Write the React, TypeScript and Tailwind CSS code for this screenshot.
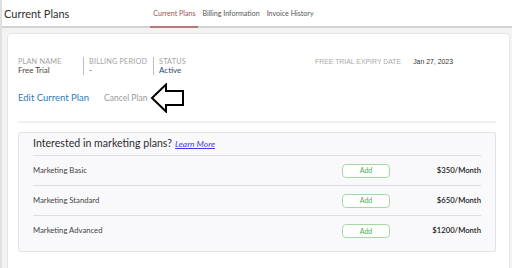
import React from "react";

const plans = [
    { name: "Marketing Basic", price: "$350/Month" },
    { name: "Marketing Standard", price: "$650/Month" },
    { name: "Marketing Advanced", price: "$1200/Month" },
];

const tabs = ["Current Plans", "Billing Information", "Invoice History"];

const App = () => {
    return (
        <div className="w-[512px] h-[268px] overflow-hidden bg-[#f3f3f3] border-l-2 border-[#e0e0e0] font-['Lato',sans-serif] text-[#333]">
            {/* header */}
            <div className="h-[28px] bg-white border-b-2 border-[#d2d2d2] flex items-end">
                <h1 className="self-center pl-[2px] text-[11px] text-[#2f2f2f] leading-none">Current Plans</h1>
                <nav className="ml-[81px] flex gap-[1px] h-full items-stretch -mb-[2px]">
                    {tabs.map((tab, i) => (
                        <div
                            key={tab}
                            className={`px-[3px] flex items-center text-[7.1px] border-b-2 ${
                                i === 0 ? "border-[#b57b7b] text-[#a0524f]" : "border-transparent text-[#555]"
                            }`}
                        >
                            {tab}
                        </div>
                    ))}
                </nav>
            </div>

            {/* body */}
            <div className="pt-[5px] pl-[5px] pr-[2px] h-full">
                <div className="bg-white rounded-[4px] border border-[#e6e6e6] h-full pl-[10px] pr-[13px] pt-[23px]">
                    <div className="flex items-start">
                        <div className="w-[65px]">
                            <div className="text-[7.3px] leading-[9px] text-[#a3a3a3] tracking-wide">PLAN NAME</div>
                            <div className="text-[8px] leading-[9px] text-[#4a3f35]">Free Trial</div>
                        </div>
                        <div className="w-[70px] border-l border-[#bdbdbd] pl-[5px]">
                            <div className="text-[7.3px] leading-[9px] text-[#a3a3a3] tracking-wide">BILLING PERIOD</div>
                            <div className="text-[8px] leading-[9px] text-[#4a3f35]">-</div>
                        </div>
                        <div className="border-l border-[#bdbdbd] pl-[5px]">
                            <div className="text-[7.3px] leading-[9px] text-[#a3a3a3] tracking-wide">STATUS</div>
                            <div className="text-[8px] leading-[9px] text-[#2d4865]">Active</div>
                        </div>
                        <div className="ml-auto mr-[43px] flex gap-[12px] leading-[9px] font-['Liberation_Sans',sans-serif] text-[6.9px]">
                            <span className="text-[#a8a8a8]">FREE TRIAL EXPIRY DATE</span>
                            <span className="text-[#333]">Jan 27, 2023</span>
                        </div>
                    </div>

                    <div className="flex items-center mt-[8px] h-[30px]">
                        <span className="text-[9.5px] text-[#2a7bbd]">Edit Current Plan</span>
                        <span className="ml-[15px] text-[8.5px] text-[#9a9a9a]">Cancel Plan</span>
                        <svg width="36" height="30" viewBox="0 0 36 30" className="ml-[3px]">
                            <path
                                d="M2 15 L16 1.5 L16 8 L33 8 L33 22 L16 22 L16 28.5 Z"
                                fill="white"
                                stroke="black"
                                strokeWidth="2"
                                strokeLinejoin="miter"
                            />
                        </svg>
                    </div>

                    <div className="mt-[8px] h-[2px] bg-[#efefef]" />

                    <div className="mt-[9px] bg-[#f9f9fb] border border-[#e2e2e2] rounded-[3px] px-[14px] pb-[5px]">
                        <div className="h-[23px] flex items-center border-b border-[#dedede]">
                            <span className="text-[10.6px] text-[#2b2b2b]">Interested in marketing plans?</span>
                            <a className="ml-[3px] text-[8.5px] italic underline text-[#3b3bea]">Learn More</a>
                        </div>
                        {plans.map((plan, i) => (
                            <div
                                key={plan.name}
                                className={`h-[30px] flex items-center ${i < plans.length - 1 ? "border-b border-[#dedede]" : ""}`}
                            >
                                <span className="flex-1 text-[7.7px] text-[#444]">{plan.name}</span>
                                <button className="w-[48px] h-[14px] rounded-[4px] border border-[#a6d8a6] bg-white text-[7px] text-[#4caf50]">
                                    Add
                                </button>
                                <span className="w-[91px] text-right text-[7.7px] font-semibold text-[#222]">{plan.price}</span>
                            </div>
                        ))}
                    </div>
                </div>
            </div>
        </div>
    );
};

export default App;
